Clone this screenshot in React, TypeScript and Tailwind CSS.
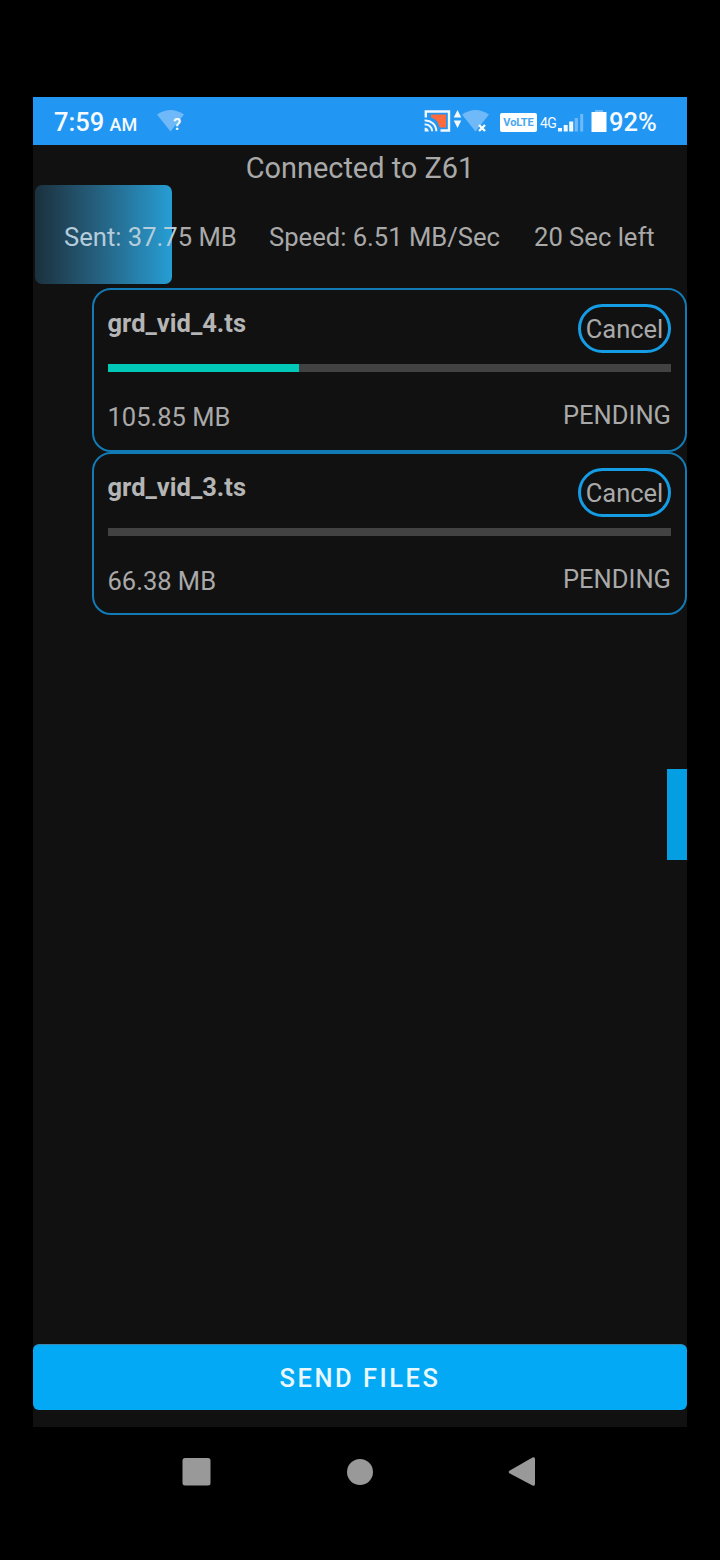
const files = [
  { name: 'grd_vid_4.ts', size: '105.85 MB', status: 'PENDING', progress: 34 },
  { name: 'grd_vid_3.ts', size: '66.38 MB', status: 'PENDING', progress: 0 },
];

function CastIcon() {
  return (
    <svg width="28" height="23" viewBox="0 0 28 23" fill="none">
      <path d="M7 4.5H22V17.5H15.5C14.5 11.5 11 8.5 7 7.5Z" fill="#ff6b3d" />
      <path d="M1.8 7.5V1.5H25V20.5H16.5" stroke="#f1f7fc" strokeWidth="2.4" />
      <path d="M.6 10.5A10.8 10.8 0 0 1 12.3 21.3M.6 14.6A6.7 6.7 0 0 1 8.2 21.3" stroke="#f1f7fc" strokeWidth="2" />
      <path d="M.6 17.8A3.6 3.6 0 0 1 4.7 21.4H.6Z" fill="#f1f7fc" />
    </svg>
  );
}

function WifiFan() {
  return (
    <svg width="27" height="22" viewBox="0 0 27 22">
      <path d="M0 4.5Q13.5 -4.5 27 4.5L13.5 21.5Z" fill="#70b9f8" />
    </svg>
  );
}

function StatusBar() {
  return (
    <header className="flex h-[47.5px] shrink-0 items-start bg-[#2196f3] text-[#f4faff]">
      <div className="ml-[21px] flex items-baseline whitespace-nowrap pt-[10px] font-medium leading-[30px]">
        <span className="w-[55.5px] text-[25.5px]">7:59</span>
        <span className="text-[18px]">AM</span>
      </div>
      <div className="relative ml-[20px] mt-[13px]">
        <WifiFan />
        <span className="absolute left-[16px] top-[6px] text-[16px] font-bold leading-[18px]">?</span>
      </div>
      <div className="ml-auto mt-[13px]"><CastIcon /></div>
      <svg className="ml-px mt-[12px]" width="9" height="22" viewBox="0 0 9 22" fill="#f1f7fc">
        <path d="M4.5 1L8.3 8.5H.7ZM4.5 19L.7 11.5H8.3Z" />
      </svg>
      <div className="relative mt-[13px]">
        <WifiFan />
        <svg className="absolute left-[16px] top-[14px]" width="8" height="8" viewBox="0 0 8 8">
          <path d="M1 1L7 7M7 1L1 7" stroke="#fff" strokeWidth="2.3" />
        </svg>
      </div>
      <div className="ml-[11px] mt-[16px] flex h-[19px] w-[37px] items-center justify-center rounded-[2px] bg-white pt-px text-[11px] font-bold tracking-[-0.1px] text-[#4aa6ef]">VoLTE</div>
      <span className="ml-[3px] mt-[16px] w-[18px] text-[14px] leading-[21px] tracking-[-0.6px]">4G</span>
      <svg className="mt-[17px]" width="26" height="18" viewBox="0 0 26 18">
        <path d="M0 14h4v3.5H0zM5.7 11h4v6.5h-4zM11.2 7.5h4v10h-4z" fill="#eff8ff" />
        <path d="M16.7 4h3.2v13.5h-3.2zM22.2 0h3v17.5h-3z" fill="#70b9f8" />
      </svg>
      <svg className="ml-[7px] mt-[13px]" width="16" height="22" viewBox="0 0 16 22">
        <path d="M.5 2h15v20H.5Z" fill="#fff" />
        <path d="M4 0h8v2H4z" fill="#70b9f8" />
      </svg>
      <span className="ml-[2px] mr-[31px] mt-[10px] w-[47px] whitespace-nowrap text-[25.5px] font-medium leading-[30px]">92%</span>
    </header>
  );
}

function FileCard({ name, size, status, progress }: (typeof files)[number]) {
  return (
    <li className="h-[163.5px] rounded-[19px] border-2 border-[#127ab5] px-[14px] pt-[14px] text-[25.5px]">
      <div className="flex h-[49px] justify-between">
        <h2 className="mt-[3px] whitespace-nowrap font-bold leading-[32px] text-[#b5b5b5]">{name}</h2>
        <button className="flex h-[49px] w-[93px] items-center justify-center rounded-full border-[3px] border-[#149ce5] pt-px leading-[30px]">Cancel</button>
      </div>
      <div className="mt-[11px] h-[8px] bg-[#424242]">
        <div className="h-full bg-[#00c9b8]" style={{ width: `${progress}%` }} />
      </div>
      <div className="mt-[27px] flex justify-between whitespace-nowrap leading-[32px]">
        <span className="mt-[2px]">{size}</span>
        <span>{status}</span>
      </div>
    </li>
  );
}

export default function App() {
  return (
    <div className="flex h-[1560px] w-[720px] flex-col bg-black px-[33px] pt-[97px] font-['Roboto',sans-serif] text-[#a9a9a9]">
      <main className="relative flex h-[1330px] shrink-0 flex-col bg-[#111111]">
        <StatusBar />
        <h1 className="h-[40.5px] pt-[5px] text-center text-[28.9px] leading-[36px]">Connected to Z61</h1>
        <section className="relative ml-[2px] h-[99px] shrink-0">
          <div className="h-full w-[137px] rounded-[7px] bg-linear-to-r from-[#1b313e] to-[#259ed5]" />
          <div className="absolute inset-0 flex items-center whitespace-nowrap pl-[29px] pt-[4px] text-[25.6px] leading-[32px]">
            <span className="w-[205px]"><span className="text-[#b5ccda]">Sent: 37.7</span>5 MB</span>
            <span className="w-[265px]">Speed: 6.51 MB/Sec</span>
            <span>20 Sec left</span>
          </div>
        </section>
        <ul className="ml-[58.5px] mt-[4px]">
          {files.map((file) => <FileCard key={file.name} {...file} />)}
        </ul>
        <div className="absolute right-0 top-[672px] h-[91px] w-[20px] bg-[#039fe2]" />
        <button className="mb-[17px] mt-auto h-[66px] shrink-0 rounded-[6px] border-t border-[#3c87ae] bg-[#03a9f4] pt-px text-[25.5px] font-medium tracking-[2.5px] text-[#e9f7fe]">SEND FILES</button>
      </main>
      <nav className="flex h-[89px] items-center">
        <svg width="654" height="32" viewBox="0 0 654 32" fill="#999999">
          <rect x="149.5" y="2" width="28" height="27.5" rx="2.5" />
          <circle cx="327" cy="16" r="13" />
          <path d="M476.4 14.8L499.5 1.5Q502 .5 502 3V28Q502 30.5 499.5 29.4L476.4 17.2Q475 16 476.4 14.8Z" />
        </svg>
      </nav>
    </div>
  );
}
